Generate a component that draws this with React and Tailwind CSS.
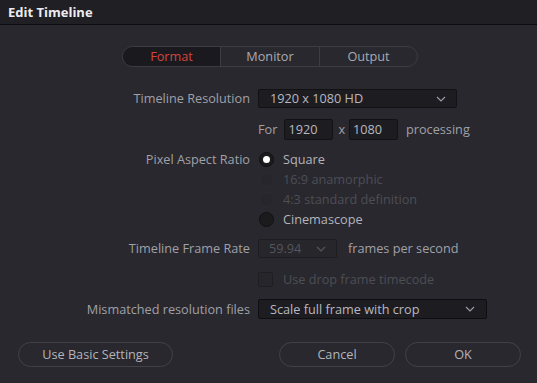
import React from "react";

const Chevron = ({ className = "" }) => (
  <svg width="10" height="6" viewBox="0 0 10 6" className={className} fill="none">
    <path d="M1 1 L5 5 L9 1" stroke="currentColor" strokeWidth="1.2" />
  </svg>
);

const Radio = ({ state, label }) => {
  return (
    <div className="flex items-center h-[20px]">
      <div
        className={
          state === "disabled"
            ? "w-[15px] h-[15px] rounded-full bg-[#26262b] border border-[#2c2c31] ml-[1px]"
            : "w-[15px] h-[15px] rounded-full bg-[#1b1b1e] border border-[#111113] flex items-center justify-center ml-[1px]"
        }
      >
        {state === "on" && <div className="w-[7px] h-[7px] rounded-full bg-white" />}
      </div>
      <span
        className={
          "ml-[9px] " + (state === "disabled" ? "text-[#4e4e55]" : "text-[#b4b4bc]")
        }
      >
        {label}
      </span>
    </div>
  );
};

export default function App() {
  return (
    <div
      className="w-[537px] h-[383px] bg-[#28282e] flex flex-col text-[12.7px] leading-none overflow-hidden"
      style={{ fontFamily: '"Open Sans", "Noto Sans", sans-serif' }}
    >
      {/* title bar */}
      <div className="h-[25px] bg-[#1f1f24] border-b border-[#0d0d0f] flex items-center pl-[8px] shrink-0">
        <span className="text-[#ececf0] font-bold text-[13px]">Edit Timeline</span>
      </div>

      {/* tabs */}
      <div className="mt-[21px] ml-[122px] w-[296px] h-[21px] rounded-full border border-[#3c3c42] flex overflow-hidden">
        <div className="w-[98px] bg-[#1a1a1e] flex items-center justify-center text-[#d2443d] border-r border-[#3c3c42]">
          Format
        </div>
        <div className="w-[99px] flex items-center justify-center text-[#a9aab2] border-r border-[#3c3c42]">
          Monitor
        </div>
        <div className="flex-1 flex items-center justify-center text-[#a9aab2]">Output</div>
      </div>

      {/* Timeline Resolution */}
      <div className="mt-[22px] flex items-center h-[19px]">
        <div className="w-[250px] text-right text-[#a0a0a8]">Timeline Resolution</div>
        <div className="ml-[8px] w-[199px] h-[19px] bg-[#1d1d21] border border-[#121214] rounded-[2px] flex items-center justify-between pl-[11px] pr-[10px] text-[#b8b8c0]">
          <span>1920 x 1080 HD</span>
          <Chevron className="text-[#9a9aa2]" />
        </div>
      </div>

      {/* For row */}
      <div className="mt-[11px] flex items-center h-[21px]">
        <div className="w-[258px]" />
        <span className="text-[#a0a0a8]">For</span>
        <div className="ml-[7px] w-[49px] h-[21px] bg-[#1d1d21] border border-[#121214] rounded-[2px] flex items-center pl-[3px] text-[#b8b8c0]">
          1920
        </div>
        <span className="ml-[5px] text-[#a0a0a8]">x</span>
        <div className="ml-[4px] w-[49px] h-[21px] bg-[#1d1d21] border border-[#121214] rounded-[2px] flex items-center pl-[3px] text-[#b8b8c0]">
          1080
        </div>
        <span className="ml-[8px] text-[#a0a0a8]">processing</span>
      </div>

      {/* Pixel aspect ratio */}
      <div className="mt-[9px] flex items-start">
        <div className="w-[250px] text-right text-[#a0a0a8] h-[20px] flex items-center justify-end">
          Pixel Aspect Ratio
        </div>
        <div className="ml-[8px] flex flex-col">
          <Radio state="on" label="Square" />
          <Radio state="disabled" label="16:9 anamorphic" />
          <Radio state="disabled" label="4:3 standard definition" />
          <Radio state="off" label="Cinemascope" />
        </div>
      </div>

      {/* Frame rate */}
      <div className="mt-[10px] flex items-center h-[19px]">
        <div className="w-[250px] text-right text-[#a0a0a8]">Timeline Frame Rate</div>
        <div className="ml-[8px] w-[79px] h-[19px] bg-[#26262b] border border-[#1e1e22] rounded-[2px] flex items-center justify-between pl-[10px] pr-[10px] text-[#55555c]">
          <span>59.94</span>
          <Chevron className="text-[#55555c]" />
        </div>
        <span className="ml-[11px] text-[#a0a0a8]">frames per second</span>
      </div>

      {/* drop frame */}
      <div className="mt-[13px] flex items-center h-[16px]">
        <div className="w-[258px]" />
        <div className="w-[15px] h-[15px] rounded-[2px] bg-[#26262b] border border-[#1f1f23]" />
        <span className="ml-[10px] text-[#4e4e55]">Use drop frame timecode</span>
      </div>

      {/* Mismatched */}
      <div className="mt-[12px] flex items-center h-[20px]">
        <div className="w-[250px] text-right text-[#a0a0a8]">Mismatched resolution files</div>
        <div className="ml-[8px] w-[229px] h-[20px] bg-[#1d1d21] border border-[#0f0f11] rounded-[2px] flex items-center justify-between pl-[11px] pr-[11px] text-[#b8b8c0]">
          <span>Scale full frame with crop</span>
          <Chevron className="text-[#9a9aa2]" />
        </div>
      </div>

      {/* buttons */}
      <div className="mt-[23px] flex items-center h-[25px]">
        <button className="ml-[18px] w-[155px] h-[25px] rounded-full border border-[#414147] text-[#b4b4bc]">
          Use Basic Settings
        </button>
        <button className="ml-[106px] w-[116px] h-[25px] rounded-full border border-[#414147] text-[#b4b4bc]">
          Cancel
        </button>
        <button className="ml-[10px] w-[116px] h-[25px] rounded-full border border-[#414147] text-[#b4b4bc]">
          OK
        </button>
      </div>
    </div>
  );
}
